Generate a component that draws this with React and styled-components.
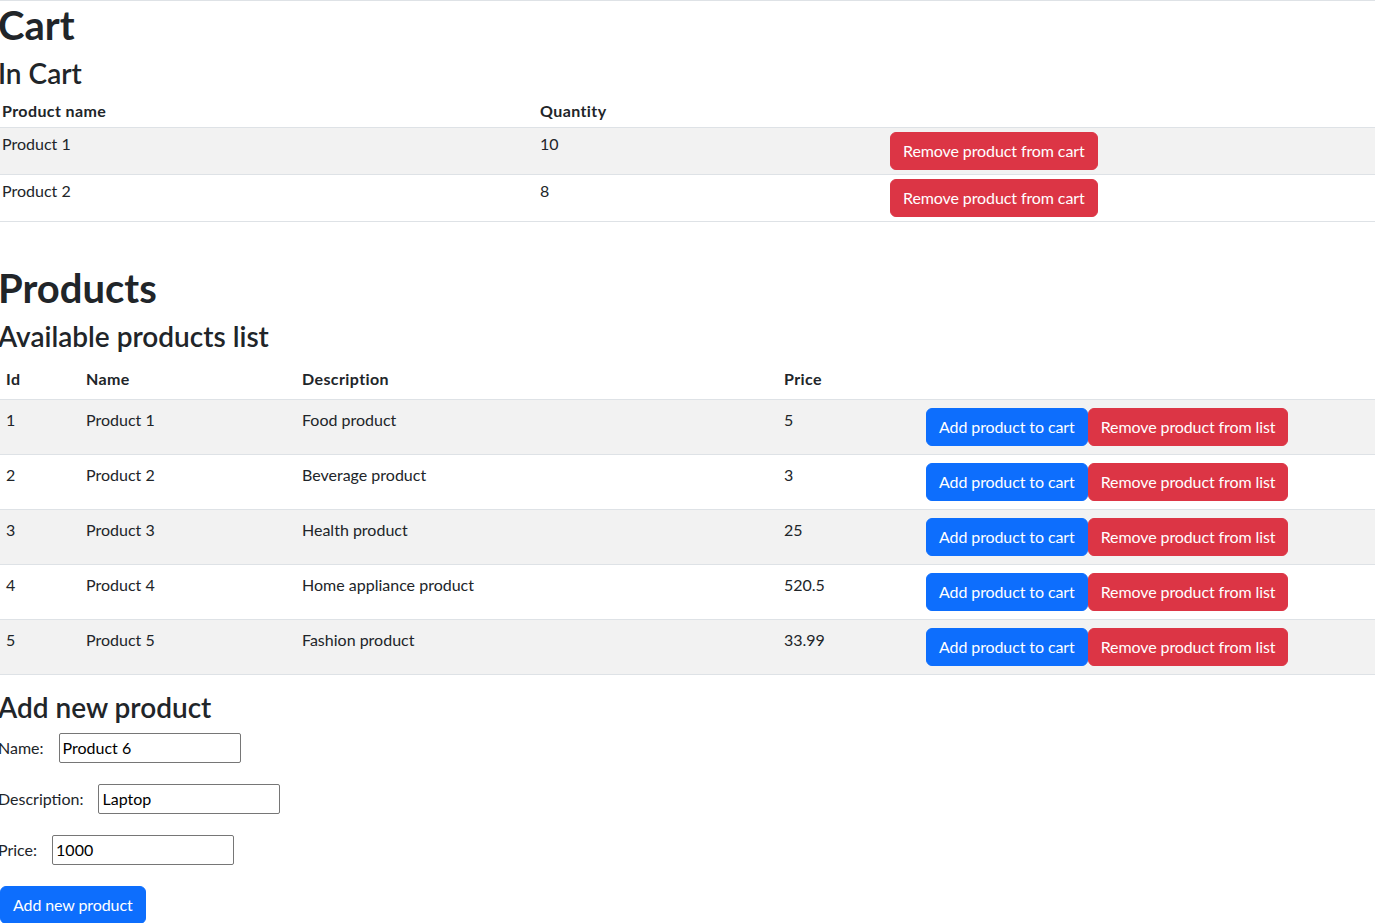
import React from 'react'
import styled, { createGlobalStyle } from 'styled-components'

const GlobalStyle = createGlobalStyle`
  body {
    margin: 0;
    border-top: 1px solid #dee2e6;
    font-family: Lato, "Liberation Sans", sans-serif;
    font-size: 16px;
    line-height: 1.5;
    color: #212529;
    background: #fff;
  }
  * { box-sizing: border-box; }
`

const Page = styled.div`
  display: flex;
  flex-direction: column;
`

const Title = styled.h1`
  margin: 0 0 8px -2px;
  font-size: 40px;
  line-height: 1.2;
  font-weight: 700;
`

const SubTitle = styled.h3`
  margin: 0 0 ${p => p.$mb ?? 8}px -2px;
  font-size: 28px;
  line-height: 1.2;
  font-weight: 600;
`

const Table = styled.table`
  width: 100%;
  border-collapse: collapse;
  margin-bottom: ${p => p.$mb || 16}px;
  table-layout: fixed;
`

const HeadCell = styled.th`
  text-align: left;
  font-weight: 700;
  font-size: 16px;
  letter-spacing: 0.4px;
  padding: ${p => p.$pad};
  border-bottom: 1px solid #dee2e6;
  vertical-align: bottom;
`

const Cell = styled.td`
  padding: ${p => p.$pad};
  border-bottom: 1px solid #dee2e6;
  vertical-align: top;
  font-weight: 400;
`

const Row = styled.tr`
  background: ${p => (p.$striped ? '#f2f2f2' : '#fff')};
`

const Button = styled.button`
  font-family: inherit;
  font-size: 16px;
  line-height: 24px;
  font-weight: 400;
  letter-spacing: -0.1px;
  color: #fff;
  background: ${p => (p.$variant === 'danger' ? '#dc3545' : '#0d6efd')};
  border: 1px solid ${p => (p.$variant === 'danger' ? '#dc3545' : '#0d6efd')};
  border-radius: 6px;
  padding: 6px 12px;
  cursor: pointer;
`

const Form = styled.form`
  display: flex;
  flex-direction: column;
  align-items: flex-start;
  gap: 21px;
`

const Field = styled.div`
  display: flex;
  align-items: center;
  height: 30px;
`

const Label = styled.label`
  margin-left: -2px;
  margin-right: 15px;
  font-weight: 400;
`

const Input = styled.input`
  width: 182px;
  height: 30px;
  border: 1px solid #767676;
  border-radius: 2px;
  padding: 1px 3px;
  font-family: inherit;
  font-size: 16px;
  color: #000;
`

const cart = [
  { name: 'Product 1', qty: 10 },
  { name: 'Product 2', qty: 8 },
]

const products = [
  { id: 1, name: 'Product 1', desc: 'Food product', price: '5' },
  { id: 2, name: 'Product 2', desc: 'Beverage product', price: '3' },
  { id: 3, name: 'Product 3', desc: 'Health product', price: '25' },
  { id: 4, name: 'Product 4', desc: 'Home appliance product', price: '520.5' },
  { id: 5, name: 'Product 5', desc: 'Fashion product', price: '33.99' },
]

const cartPad = '4px 2px'
const prodPad = '8px 6px'

export default function App() {
  return (
    <Page>
      <GlobalStyle />
      <Title>Cart</Title>
      <SubTitle $mb={4}>In Cart</SubTitle>
      <Table $mb={42}>
        <colgroup>
          <col style={{ width: 538 }} />
          <col style={{ width: 350 }} />
          <col />
        </colgroup>
        <thead>
          <tr>
            <HeadCell $pad={cartPad}>Product name</HeadCell>
            <HeadCell $pad={cartPad}>Quantity</HeadCell>
            <HeadCell $pad={cartPad}></HeadCell>
          </tr>
        </thead>
        <tbody>
          {cart.map((c, i) => (
            <Row key={c.name} $striped={i % 2 === 0}>
              <Cell $pad={cartPad}>{c.name}</Cell>
              <Cell $pad={cartPad}>{c.qty}</Cell>
              <Cell $pad={cartPad}>
                <Button $variant="danger">Remove product from cart</Button>
              </Cell>
            </Row>
          ))}
        </tbody>
      </Table>

      <Title>Products</Title>
      <SubTitle $mb={6}>Available products list</SubTitle>
      <Table>
        <colgroup>
          <col style={{ width: 80 }} />
          <col style={{ width: 216 }} />
          <col style={{ width: 482 }} />
          <col style={{ width: 142 }} />
          <col />
        </colgroup>
        <thead>
          <tr>
            <HeadCell $pad={prodPad}>Id</HeadCell>
            <HeadCell $pad={prodPad}>Name</HeadCell>
            <HeadCell $pad={prodPad}>Description</HeadCell>
            <HeadCell $pad={prodPad}>Price</HeadCell>
            <HeadCell $pad={prodPad}></HeadCell>
          </tr>
        </thead>
        <tbody>
          {products.map((p, i) => (
            <Row key={p.id} $striped={i % 2 === 0}>
              <Cell $pad={prodPad}>{p.id}</Cell>
              <Cell $pad={prodPad}>{p.name}</Cell>
              <Cell $pad={prodPad}>{p.desc}</Cell>
              <Cell $pad={prodPad}>{p.price}</Cell>
              <Cell $pad={prodPad}>
                <Button>Add product to cart</Button>
                <Button $variant="danger">Remove product from list</Button>
              </Cell>
            </Row>
          ))}
        </tbody>
      </Table>

      <SubTitle>Add new product</SubTitle>
      <Form onSubmit={e => e.preventDefault()}>
        <Field>
          <Label>Name:</Label>
          <Input defaultValue="Product 6" />
        </Field>
        <Field>
          <Label>Description:</Label>
          <Input defaultValue="Laptop" />
        </Field>
        <Field>
          <Label>Price:</Label>
          <Input defaultValue="1000" />
        </Field>
        <Button type="submit">Add new product</Button>
      </Form>
    </Page>
  )
}
